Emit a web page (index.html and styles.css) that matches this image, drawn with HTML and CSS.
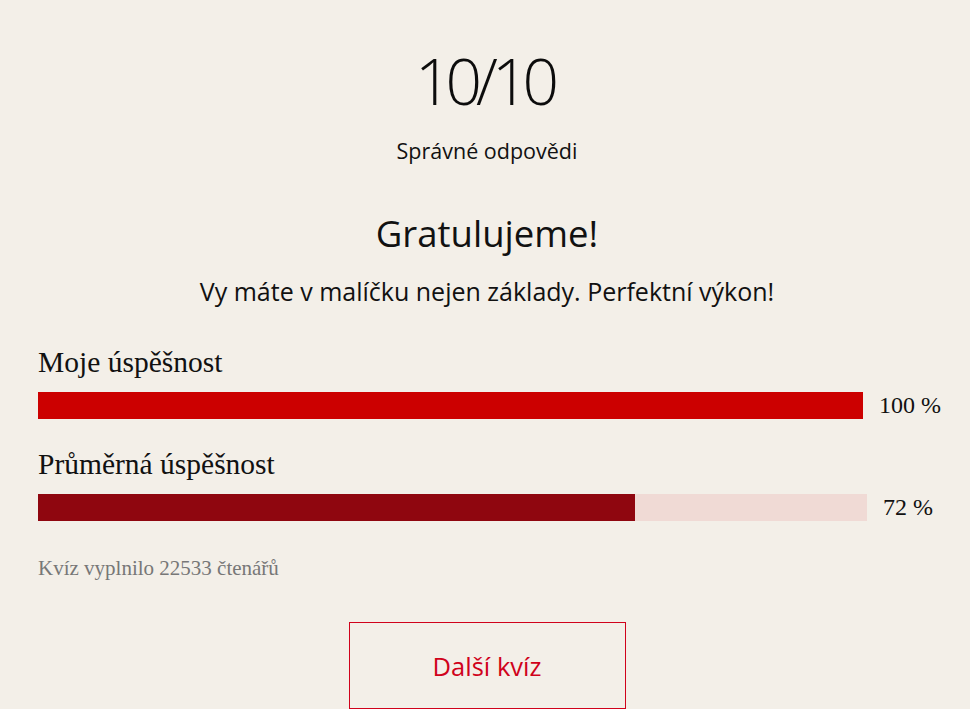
FILE: index.html
```html
<!DOCTYPE html>
<html lang="cs">
<head>
<meta charset="utf-8">
<title>Výsledek kvízu</title>
<link rel="stylesheet" href="styles.css">
</head>
<body>
<main class="result">
  <section class="score">
    <div class="score-value">10/10</div>
    <div class="score-label">Správné odpovědi</div>
  </section>
  <section class="verdict">
    <h2 class="verdict-title">Gratulujeme!</h2>
    <p class="verdict-text">Vy máte v malíčku nejen základy. Perfektní výkon!</p>
  </section>
  <section class="stats">
    <div class="stat">
      <div class="stat-title">Moje úspěšnost</div>
      <div class="stat-row">
        <div class="bar"><div class="bar-fill fill-mine" style="width:100%"></div></div>
        <div class="pct pct-mine">100 %</div>
      </div>
    </div>
    <div class="stat">
      <div class="stat-title">Průměrná úspěšnost</div>
      <div class="stat-row">
        <div class="bar"><div class="bar-fill fill-avg" style="width:72%"></div></div>
        <div class="pct pct-avg">72 %</div>
      </div>
    </div>
    <p class="count">Kvíz vyplnilo 22533 čtenářů</p>
  </section>
  <div class="actions">
    <a class="next-btn" href="#">Další kvíz</a>
  </div>
</main>
</body>
</html>
```
FILE: styles.css
```css
html, body {
  margin: 0;
  padding: 0;
  background: #f3efe8;
}
body {
  font-family: "Open Sans", "DejaVu Sans", sans-serif;
  color: #111;
}
.result {
  padding: 0 14px 0 18px;
}
.score {
  text-align: center;
  padding-top: 46px;
}
.score-value {
  font-size: 64px;
  line-height: 70px;
  font-weight: 300;
  letter-spacing: -6px;
  text-indent: -6px;
  color: #0c0c0c;
}
.score-label {
  margin-top: 22px;
  font-size: 21.5px;
  line-height: 26px;
}
.verdict {
  text-align: center;
  margin-top: 46px;
}
.verdict-title {
  margin: 0;
  font-size: 36.5px;
  line-height: 46px;
  font-weight: 400;
}
.verdict-text {
  margin: 20px 0 0;
  font-size: 25px;
  line-height: 30px;
}
.stats {
  margin-top: 38px;
  padding-left: 20px;
}
.stat-title {
  font-family: "Liberation Serif", serif;
  font-size: 29.5px;
  line-height: 36px;
}
.stat-row {
  display: flex;
  align-items: center;
  margin-top: 11px;
}
.stat + .stat {
  margin-top: 27px;
}
.bar {
  flex: 1;
  height: 27px;
  background: #f0dad5;
}
.bar-fill {
  height: 100%;
}
.fill-mine {
  background: #cc0000;
}
.fill-avg {
  background: #8f060f;
}
.pct {
  box-sizing: border-box;
  padding-left: 16px;
  font-family: "Liberation Serif", serif;
  font-size: 24px;
  line-height: 28px;
}
.pct-mine {
  width: 93px;
}
.pct-avg {
  width: 89px;
}
.count {
  margin: 34px 0 0;
  font-family: "Liberation Serif", serif;
  font-size: 21px;
  line-height: 26px;
  color: #777;
}
.actions {
  display: flex;
  justify-content: center;
  margin-top: 41px;
}
.next-btn {
  display: flex;
  align-items: center;
  justify-content: center;
  width: 277px;
  height: 87px;
  box-sizing: border-box;
  border: 1px solid #d0021b;
  color: #d0021b;
  text-decoration: none;
  font-size: 25.5px;
}
```
